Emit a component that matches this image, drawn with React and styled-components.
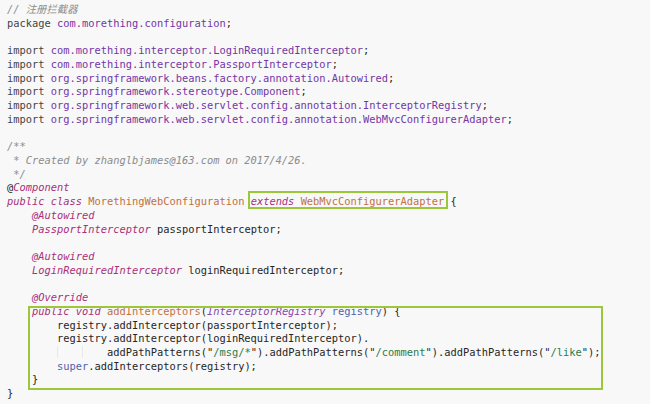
import styled, { createGlobalStyle } from 'styled-components';

const GlobalStyle = createGlobalStyle`
    html, body {
        margin:0;
        padding:0;
        background:#f8f8f8;
    }
`

const Editor = styled.div`
    width:650px;
    height:404px;
    overflow:hidden;
    box-sizing:border-box;
    padding:3px 0 0 7px;
    background:#f8f8f8;
    color:#262626;
    font-family:"DejaVu Sans Mono", "Noto Sans CJK SC", monospace;
    font-size:10.38px;
    line-height:13.73px;
`
const Line = styled.div`
    white-space:pre;
    height:13.73px;
`
const Comment = styled.span`
    color:#8c8c8c;
    font-style:italic;
`
const Keyword = styled.span`
    color:${p => p.$dark ? '#444444' : '#a8307a'};
    font-style:${p => p.$dark ? 'normal' : 'italic'};
`
const Pkg = styled.span`
    color:#7336a6;
`
const ClassName = styled.span`
    color:#c2703e;
`
const Param = styled.span`
    color:${p => p.$type ? '#8a48a8' : '#4f63ab'};
    font-style:${p => p.$type ? 'italic' : 'normal'};
`
const Str = styled.span`
    color:#2e7a48;
`
const Guide = styled.span`
    box-shadow:inset 1px 0 0 #e8e8e8;
`
const Boxed = styled.span`
    position:relative;

    &::after{
        content:"";
        position:absolute;
        left:-3px;
        right:-4px;
        top:-4px;
        bottom:-2px;
        border:2px solid #9cc73a;
        pointer-events:none;
    }
`
const Block = styled.div`
    position:relative;

    &::after{
        content:"";
        position:absolute;
        left:21px;
        width:571px;
        top:1px;
        bottom:-3px;
        border:2px solid #9cc73a;
        pointer-events:none;
    }
`

const Import = ({ path }) => (
    <Line><Keyword $dark>import</Keyword> <Pkg>{path}</Pkg>;</Line>
)

const App = () => {
    return (
        <>
            <GlobalStyle />
            <Editor>
                <Line><Comment>// 注册拦截器</Comment></Line>
                <Line><Keyword $dark>package</Keyword> <Pkg>com.morething.configuration</Pkg>;</Line>
                <Line> </Line>
                <Import path="com.morething.interceptor.LoginRequiredInterceptor" />
                <Import path="com.morething.interceptor.PassportInterceptor" />
                <Import path="org.springframework.beans.factory.annotation.Autowired" />
                <Import path="org.springframework.stereotype.Component" />
                <Import path="org.springframework.web.servlet.config.annotation.InterceptorRegistry" />
                <Import path="org.springframework.web.servlet.config.annotation.WebMvcConfigurerAdapter" />
                <Line> </Line>
                <Line><Comment>/**</Comment></Line>
                <Line><Comment> * Created by zhanglbjames@163.com on 2017/4/26.</Comment></Line>
                <Line><Comment> */</Comment></Line>
                <Line>@<Keyword>Component</Keyword></Line>
                <Line>
                    <Keyword>public class</Keyword> <ClassName>MorethingWebConfiguration</ClassName>{' '}
                    <Boxed><Keyword>extends</Keyword> <ClassName>WebMvcConfigurerAdapter</ClassName></Boxed> {'{'}
                </Line>
                <Line>{'    '}<Keyword>@Autowired</Keyword></Line>
                <Line>{'    '}<Keyword>PassportInterceptor</Keyword> passportInterceptor;</Line>
                <Line> </Line>
                <Line>{'    '}<Keyword>@Autowired</Keyword></Line>
                <Line>{'    '}<Keyword>LoginRequiredInterceptor</Keyword> loginRequiredInterceptor;</Line>
                <Line> </Line>
                <Line>{'    '}<Keyword>@Override</Keyword></Line>
                <Block>
                    <Line>
                        {'    '}<Keyword>public void</Keyword> <ClassName>addInterceptors</ClassName>(<Param $type>InterceptorRegistry</Param> <Param>registry</Param>) {'{'}
                    </Line>
                    <Line>{'        '}registry.addInterceptor(passportInterceptor);</Line>
                    <Line>{'        '}registry.addInterceptor(loginRequiredInterceptor).</Line>
                    <Line>
                        {'        '}<Guide>{'    '}</Guide><Guide>{'    '}</Guide>addPathPatterns("<Str>/msg/*</Str>").addPathPatterns("<Str>/comment</Str>").addPathPatterns("<Str>/like</Str>");
                    </Line>
                    <Line>{'        '}<Param>super</Param>.addInterceptors(registry);</Line>
                    <Line>{'    }'}</Line>
                </Block>
                <Line>{'}'}</Line>
            </Editor>
        </>
    )
}

export default App
